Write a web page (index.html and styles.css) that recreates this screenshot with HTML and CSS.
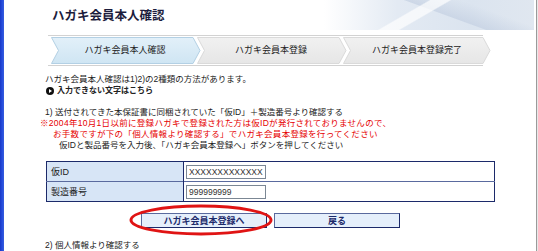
FILE: index.html
```html
<!DOCTYPE html>
<html lang="ja">
<head>
<meta charset="utf-8">
<title>ハガキ会員本人確認</title>
<link rel="stylesheet" href="styles.css">
</head>
<body>
<div class="page">
  <div class="edge-left"></div>
  <div class="main">
    <header class="head">
      <h1 class="title">ハガキ会員本人確認</h1>
      <div class="head-art"></div>
    </header>

    <div class="steps">
      <svg class="steps-bg" width="446" height="31" viewBox="0 0 446 31">
        <line x1="1" y1="0.5" x2="436" y2="0.5" stroke="#d2d2d2" stroke-width="1"/>
        <line x1="1" y1="30.5" x2="436" y2="30.5" stroke="#d2d2d2" stroke-width="1"/>
        <defs>
          <linearGradient id="g1" x1="0" y1="0" x2="0" y2="1">
            <stop offset="0" stop-color="#e2f0f9"/>
            <stop offset="1" stop-color="#cfe5f3"/>
          </linearGradient>
          <linearGradient id="g2" x1="0" y1="0" x2="0" y2="1">
            <stop offset="0" stop-color="#f1f1f1"/>
            <stop offset="1" stop-color="#e6e6e6"/>
          </linearGradient>
        </defs>
        <polygon points="4.5,2.5 146,2.5 153,15.5 146,28.5 4.5,28.5 11.5,15.5" fill="url(#g1)" stroke="#b3d0e4" stroke-width="1"/>
        <polygon points="150.5,2.5 292,2.5 299,15.5 292,28.5 150.5,28.5 157.5,15.5" fill="url(#g2)" stroke="#dadada" stroke-width="1"/>
        <polygon points="296.5,2.5 436,2.5 443,15.5 436,28.5 296.5,28.5 303.5,15.5" fill="url(#g2)" stroke="#dadada" stroke-width="1"/>
      </svg>
      <div class="step-labels">
        <div class="step">ハガキ会員本人確認</div>
        <div class="step">ハガキ会員本登録</div>
        <div class="step">ハガキ会員本登録完了</div>
      </div>
    </div>

    <div class="intro">
      <p>ハガキ会員本人確認は1)2)の2種類の方法があります。</p>
      <p class="link"><svg class="link-icon" width="8" height="8" viewBox="0 0 8 8"><circle cx="4" cy="4" r="4" fill="#111"/><polygon points="3,2 6,4 3,6" fill="#fff"/></svg>入力できない文字はこちら</p>
    </div>

    <div class="method">
      <p>1) 送付されてきた本保証書に同梱されていた「仮ID」＋製造番号より確認する</p>
      <p class="red r1">※2004年10月1日以前に登録ハガキで登録された方は仮IDが発行されておりませんので、</p>
      <p class="red r2">お手数ですが下の「個人情報より確認する」でハガキ会員本登録を行ってください</p>
      <p class="note">仮IDと製品番号を入力後、「ハガキ会員本登録へ」ボタンを押してください</p>
    </div>

    <table class="form">
      <tr>
        <th>仮ID</th>
        <td><span class="field">XXXXXXXXXXXXX</span></td>
      </tr>
      <tr>
        <th>製造番号</th>
        <td><span class="field">999999999</span></td>
      </tr>
    </table>

    <div class="buttons">
      <div class="btn-wrap">
        <button class="btn">ハガキ会員本登録へ</button>
        <svg class="ring" width="146" height="32" viewBox="0 0 146 32">
          <ellipse cx="72" cy="16" rx="70" ry="14" fill="none" stroke="#e01414" stroke-width="3"/>
        </svg>
      </div>
      <button class="btn">戻る</button>
    </div>

    <p class="method2">2) 個人情報より確認する</p>
  </div>
  <div class="edge-right"></div>
</div>
</body>
</html>
```

FILE: styles.css
```css
html, body {
  margin: 0;
  padding: 0;
  background: #fff;
}

body {
  font-family: "Liberation Sans", "Noto Sans CJK JP", sans-serif;
  color: #222;
}

.page {
  display: flex;
  width: 538px;
  height: 251px;
  overflow: hidden;
}

.edge-left {
  width: 4px;
  background: linear-gradient(to right, #1838c8, #2a52e0 70%, #3a5cd8);
}

.edge-right {
  width: 2px;
  background: linear-gradient(to right, #9a9a9a 50%, #e8e8e8 50%);
}

.main {
  flex: 1;
  position: relative;
}

.head {
  height: 35px;
  display: flex;
  position: relative;
}

.title {
  margin: 0;
  padding-left: 48px;
  padding-top: 6px;
  font-family: "Noto Sans CJK JP", sans-serif;
  font-size: 12.5px;
  line-height: 18px;
  font-weight: bold;
  color: #1c1c3c;
  position: relative;
  z-index: 1;
}

.head-art {
  position: absolute;
  left: 320px;
  top: 0;
  width: 210px;
  height: 30px;
  background:
    linear-gradient(150deg, transparent 40%, rgba(255,255,255,0.7) 41%, rgba(255,255,255,0.7) 48%, transparent 49%),
    linear-gradient(20deg, transparent 55%, rgba(196,208,226,0.7) 56%, transparent 75%),
    linear-gradient(to right, rgba(232,238,246,0) 0%, #e3eaf3 35%, #dbe4ef 70%, #e0e7f0 100%);
}

.steps {
  position: relative;
  margin-left: 43px;
  width: 446px;
  height: 31px;
}

.steps-bg {
  position: absolute;
  left: 0;
  top: 0;
}

.step-labels {
  position: relative;
  display: flex;
  padding-left: 5px;
  height: 31px;
  align-items: center;
}

.step {
  width: 146px;
  text-align: center;
  font-size: 9px;
  line-height: 11px;
  color: #222;
}

p {
  margin: 0;
  font-size: 8.5px;
  line-height: 11px;
}

.intro {
  margin-top: 8px;
  padding-left: 41px;
}

.link {
  display: flex;
  align-items: center;
  font-weight: bold;
  font-size: 8px;
  padding-left: 1px;
}

.link-icon {
  margin-right: 3px;
}

.method {
  margin-top: 11px;
  padding-left: 41px;
}

.red {
  color: #e60000;
  letter-spacing: 0.3px;
}

.r1 {
  margin-left: -5px;
}

.r2 {
  padding-left: 8px;
}

.note {
  padding-left: 14px;
}

.form {
  margin-top: 10px;
  margin-left: 42px;
  width: 449px;
  border-collapse: collapse;
  border: 1px solid #1c2a6a;
}

.form th,
.form td {
  height: 19px;
  padding: 0;
  font-size: 9px;
  font-weight: normal;
  text-align: left;
}

.form tr + tr th,
.form tr + tr td {
  border-top: 1px solid #5a6a9e;
}

.form th {
  width: 132px;
  padding-left: 4px;
  background: #d7e5f6;
  border-right: 1px solid #1c2a6a;
  color: #222;
}

.form td {
  padding-left: 2px;
}

.field {
  display: block;
  box-sizing: border-box;
  width: 80px;
  height: 14px;
  border: 1px solid #7b8794;
  padding-left: 2px;
  font-size: 8.5px;
  line-height: 12px;
  color: #333;
}

.buttons {
  margin-top: 11px;
  margin-left: 42px;
  width: 449px;
  display: flex;
  justify-content: center;
  gap: 7px;
}

.btn-wrap {
  position: relative;
  display: flex;
}

.btn {
  box-sizing: border-box;
  width: 126px;
  height: 15px;
  padding: 0;
  margin: 0;
  background: #e5effb;
  border: 1px solid #1c2a6a;
  border-top-color: #5a6a9e;
  border-left-color: #5a6a9e;
  font-family: "Liberation Sans", "Noto Sans CJK JP", sans-serif;
  font-size: 9px;
  line-height: 12px;
  font-weight: bold;
  color: #1c2a6a;
}

.ring {
  position: absolute;
  left: -12px;
  top: -9px;
}

.method2 {
  margin-top: 12px;
  padding-left: 41px;
}
```
